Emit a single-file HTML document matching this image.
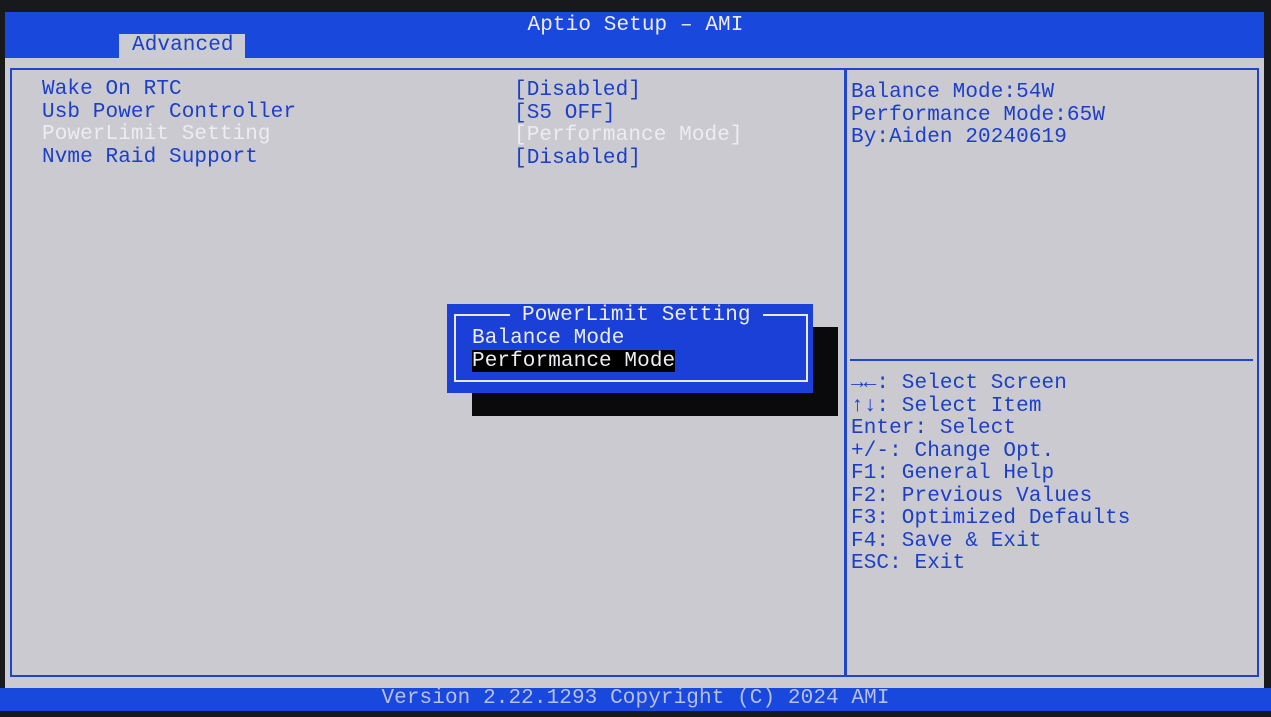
<!DOCTYPE html>
<html><head><meta charset="utf-8"><style>
*{margin:0;padding:0;box-sizing:border-box}
body{width:1271px;height:717px;background:#18191c;position:relative;overflow:hidden;font-family:"Liberation Mono","DejaVu Sans Mono",monospace;font-size:21px;letter-spacing:0.1px}
.a{position:absolute;white-space:pre;line-height:22.5px}
.blue{color:#1b3fc8}
.lt{color:#ececf2}
</style></head><body>
<div class="a" style="left:5px;top:12px;width:1259px;height:48px;background:#1848dc"></div>
<div class="a lt" style="left:0;width:1271px;top:15px;text-align:center">Aptio Setup – AMI</div>
<div class="a" style="left:119px;top:34px;width:126px;height:26px;background:#cbcbd2"></div>
<div class="a blue" style="left:132px;top:35px">Advanced</div>
<div class="a" style="left:5px;top:58px;width:1259px;height:630px;background:#cacad0"></div>
<div class="a" style="left:10px;top:68px;width:1249px;height:609px;border:2px solid #1f44d0"></div>
<div class="a" style="left:844px;top:70px;width:3px;height:606px;background:#1f44d0"></div>
<div class="a" style="left:850px;top:359px;width:403px;height:2px;background:#1f44d0"></div>
<div class="a blue" style="left:42px;top:79px">Wake On RTC
Usb Power Controller
<span class="lt">PowerLimit Setting</span>
Nvme Raid Support</div>
<div class="a blue" style="left:514px;top:80px">[Disabled]
[S5 OFF]
<span class="lt">[Performance Mode]</span>
[Disabled]</div>
<div class="a blue" style="left:851px;top:82px">Balance Mode:54W
Performance Mode:65W
By:Aiden 20240619</div>
<div class="a blue" style="left:851px;top:373px;line-height:22.5px">→←: Select Screen
↑↓: Select Item
Enter: Select
+/-: Change Opt.
F1: General Help
F2: Previous Values
F3: Optimized Defaults
F4: Save &amp; Exit
ESC: Exit</div>
<div class="a" style="left:472px;top:327px;width:366px;height:89px;background:#0a0a0c"></div>
<div class="a" style="left:447px;top:304px;width:366px;height:89px;background:#1a40d8"></div>
<div class="a" style="left:454px;top:314px;width:354px;height:68px;border:2px solid #e8e8f0"></div>
<div class="a lt" style="left:510px;top:305px;background:#1a40d8;padding:0 12px">PowerLimit Setting</div>
<div class="a" style="left:472px;top:350px;width:203px;height:22px;background:#000"></div>
<div class="a lt" style="left:472px;top:328px">Balance Mode
Performance Mode</div>
<div class="a" style="left:0;top:688px;width:1271px;height:23px;background:#1848dc"></div>
<div class="a" style="left:0;top:688px;width:1271px;text-align:center;color:#b8bfe6">Version 2.22.1293 Copyright (C) 2024 AMI</div>
</body></html>
